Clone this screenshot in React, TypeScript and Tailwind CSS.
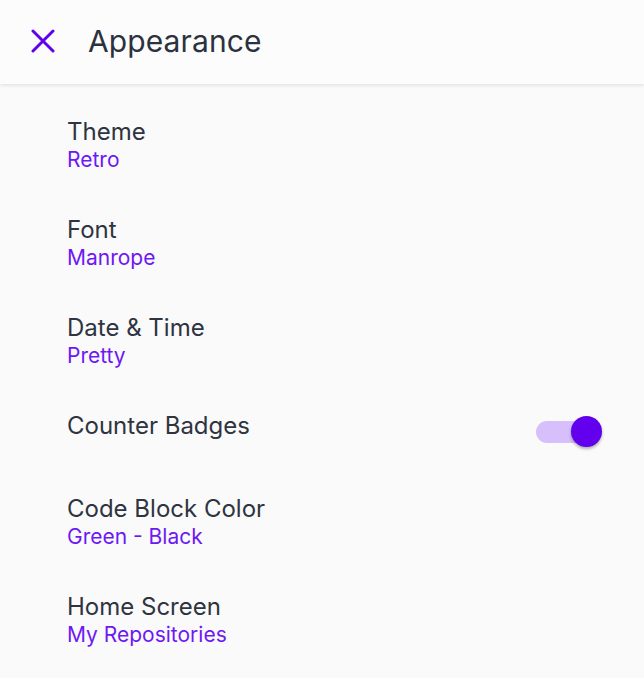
import React, { useState } from 'react';

const items: { title: string; value?: string; toggle?: boolean }[] = [
    { title: 'Theme', value: 'Retro' },
    { title: 'Font', value: 'Manrope' },
    { title: 'Date & Time', value: 'Pretty' },
    { title: 'Counter Badges', toggle: true },
    { title: 'Code Block Color', value: 'Green - Black' },
    { title: 'Home Screen', value: 'My Repositories' },
];

const Switch: React.FC<{ on: boolean; onChange: () => void }> = ({ on, onChange }) => (
    <button onClick={onChange} className="relative h-[41px] w-[66px]">
        <span className={`absolute left-0 top-[10px] h-[22px] w-[58px] rounded-full ${on ? 'bg-[#d6bffb]' : 'bg-[#c9c9cf]'}`} />
        <span
            className={`absolute top-[5px] h-[31px] w-[31px] rounded-full shadow-[0_2px_3px_rgba(0,0,0,0.3)] ${
                on ? 'left-[35px] bg-[#6200ee]' : 'left-0 bg-[#f4f4f4]'
            }`}
        />
    </button>
);

export default function App() {
    const [badges, setBadges] = useState(true);

    return (
        <div className="min-h-[678px] w-[644px] bg-[#fafafb] font-['Inter',sans-serif]">
            <header className="relative z-10 flex h-[84px] items-center bg-[#fcfcfd] pb-[3px] shadow-[0_1px_4px_rgba(0,0,0,0.12)]">
                <button className="ml-[31px] flex h-6 w-6 items-center justify-center text-[#6200ee]">
                    <svg width="24" height="24" viewBox="0 0 24 24" fill="none">
                        <path d="M2 2L22 22M22 2L2 22" stroke="currentColor" strokeWidth="3" strokeLinecap="round" />
                    </svg>
                </button>
                <h1 className="ml-[33px] text-[30px] leading-none text-[#2b323d] tracking-[0.1px]">Appearance</h1>
            </header>

            <div className="flex flex-col gap-[42px] pl-[67px] pr-[42px] pt-[33px]">
                {items.map((item) => (
                    <div key={item.title} className="flex items-start justify-between">
                        <div className="flex flex-col">
                            <span className="text-[24px] leading-[30px] text-[#2e3440]">{item.title}</span>
                            {item.value && (
                                <span className="text-[21px] leading-[26px] text-[#6e18f4]">{item.value}</span>
                            )}
                        </div>
                        {item.toggle && <Switch on={badges} onChange={() => setBadges(!badges)} />}
                    </div>
                ))}
            </div>
        </div>
    );
}
